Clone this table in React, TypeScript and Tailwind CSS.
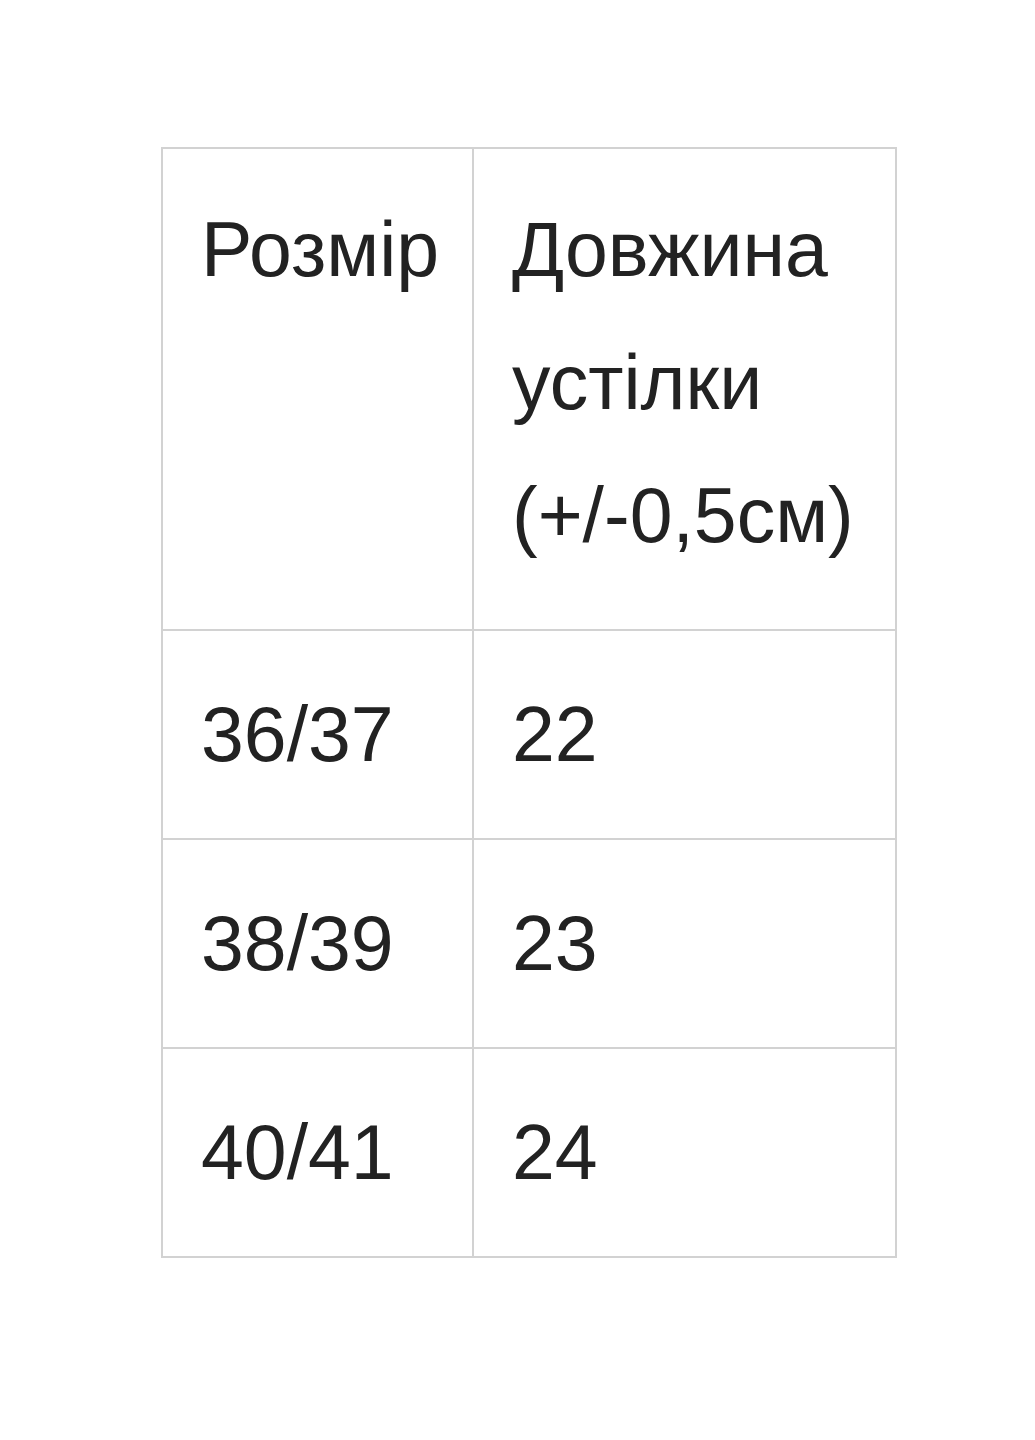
const rows = [
  { size: '36/37', length: '22' },
  { size: '38/39', length: '23' },
  { size: '40/41', length: '24' },
]

export default function App() {
  return (
    <div className="min-h-[1440px] w-[1035px] bg-white pl-[161px] pt-[147px] font-['Liberation_Sans',Arial,sans-serif] text-[#222222]">
      <table className="w-[734px] table-fixed border-collapse text-[77px] leading-[133px]">
        <colgroup>
          <col className="w-[311px]" />
          <col className="w-[423px]" />
        </colgroup>
        <tbody>
          <tr className="h-[482px]">
            <td className="border-2 border-[#d2d2d2] px-[38px] pt-[34px] pb-[36px] align-top font-normal">Розмір</td>
            <td className="border-2 border-[#d2d2d2] px-[38px] pt-[34px] pb-[36px] align-top font-normal">
              Довжина устілки (+/-0,5см)
            </td>
          </tr>
          {rows.map((r) => (
            <tr key={r.size} className="h-[209px]">
              <td className="border-2 border-[#d2d2d2] px-[38px] py-[36px]">{r.size}</td>
              <td className="border-2 border-[#d2d2d2] px-[38px] py-[36px]">{r.length}</td>
            </tr>
          ))}
        </tbody>
      </table>
    </div>
  )
}
